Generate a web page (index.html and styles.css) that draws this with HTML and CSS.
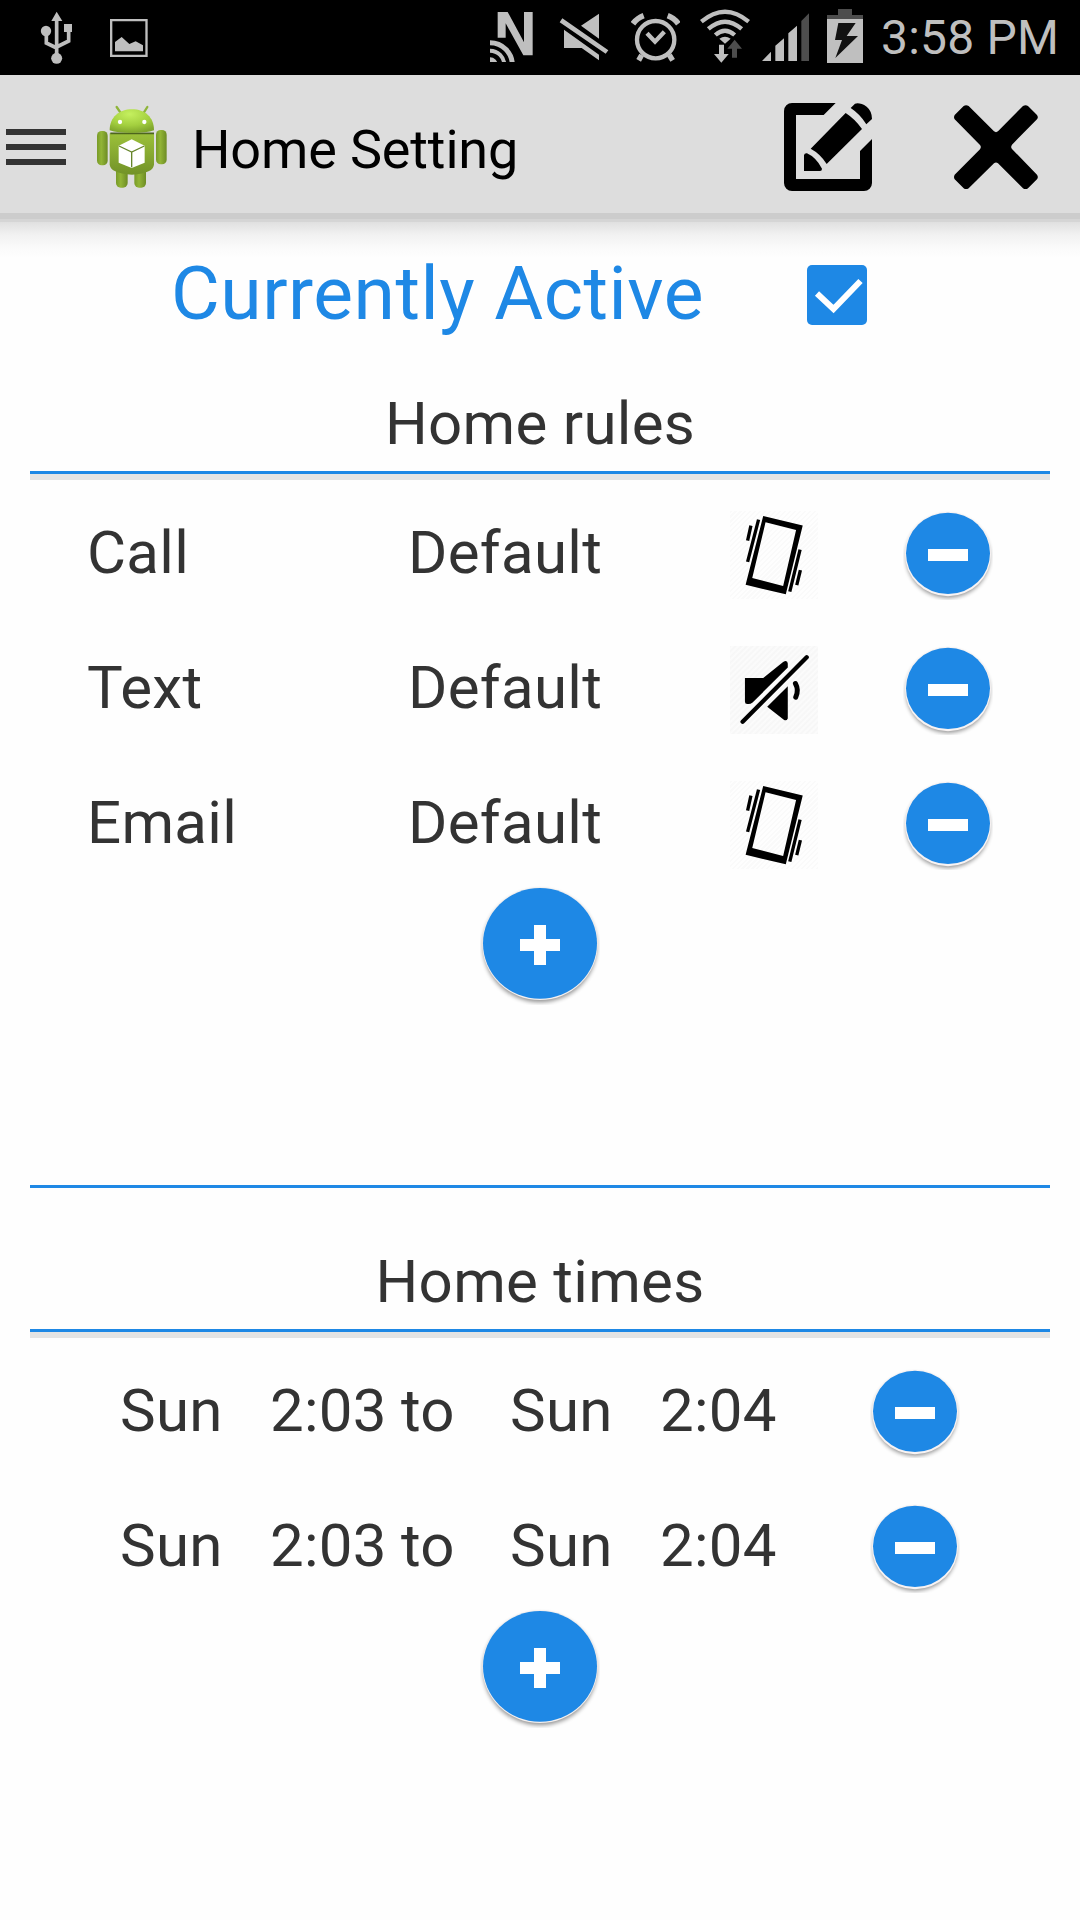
FILE: index.html
```html
<!DOCTYPE html>
<html lang="en">
<head>
<meta charset="utf-8">
<title>Home Setting</title>
<link rel="stylesheet" href="styles.css">
</head>
<body>
<svg class="defs" aria-hidden="true">
  <defs>
    <linearGradient id="green" x1="0" y1="0" x2="0" y2="1"><stop offset="0" stop-color="#9cc13a"/><stop offset="1" stop-color="#729228"/></linearGradient>
    <linearGradient id="limb" x1="0" y1="0" x2="1" y2="0"><stop offset="0" stop-color="#789a28"/><stop offset=".4" stop-color="#92b536"/><stop offset="1" stop-color="#6d8c24"/></linearGradient>
    <radialGradient id="head" cx=".45" cy=".2" r=".8"><stop offset="0" stop-color="#c5f05f"/><stop offset=".6" stop-color="#a3cf3f"/><stop offset="1" stop-color="#7fa52c"/></radialGradient>
    <filter id="soft" x="-20%" y="-20%" width="140%" height="150%"><feGaussianBlur stdDeviation="6"/></filter>
  </defs>
  <symbol id="minus" viewBox="0 0 270 270">
    <ellipse cx="135" cy="140" rx="126" ry="124" fill="#000" opacity=".42" filter="url(#soft)"/>
    <ellipse cx="135" cy="132" rx="129" ry="127" fill="#f8f3f3"/>
    <ellipse cx="135" cy="130" rx="126" ry="122" fill="#1e88e5"/>
    <path fill="#fff" d="M75 117h120v36H75z"/>
  </symbol>
  <symbol id="plus" viewBox="0 0 360 360">
    <ellipse cx="180" cy="184" rx="171" ry="168" fill="#000" opacity=".42" filter="url(#soft)"/>
    <ellipse cx="180" cy="176" rx="173" ry="169" fill="#f3efef"/>
    <ellipse cx="180" cy="175" rx="171" ry="166" fill="#1e88e5"/>
    <path fill="#fff" d="M162 120h36v42h42v36h-42v42h-36v-42h-42v-36h42z"/>
  </symbol>
  <symbol id="vibrate" viewBox="90 62 265 265">
    <path fill-rule="evenodd" d="M190 77 309 106 258 313 137 284ZM197 96 157 264 250 288 289 119Z"/>
    <path d="M176 88 143 215M153 106 143 151M301 178 270 305M302 240 291 285" stroke="#000" stroke-width="10"/>
  </symbol>
  <symbol id="mute" viewBox="90 467 265 265">
    <path d="M135 563H190L250 515Q263 508 264 520V532L158 637Q152 642 146 642H142Q135 642 135 635ZM264 588V685Q261 693 253 690L202 650Z"/>
    <path d="M128 695 321 501" fill="none" stroke="#000" stroke-width="13" stroke-linecap="round"/>
    <path d="M287 580Q298 600 288 621" fill="none" stroke="#000" stroke-width="15" stroke-linecap="round"/>
  </symbol>
</svg>

<header class="status-bar">
  <svg class="usb" viewBox="120 30 100 165" fill="#bfbfbf">
    <path d="M170 35 187 63H154ZM192 72h24v24h-24z"/><circle cx="138" cy="93" r="15.500"/><circle cx="170" cy="175" r="16.500"/>
    <path d="M170 60V165M139 100V129L170 144M206 92V123L170 141" fill="none" stroke="#bfbfbf" stroke-width="11"/>
  </svg>
  <svg class="photo" viewBox="330 57 114 114" fill="#bfbfbf">
    <path d="M333.500 60.500h106v107h-106z" fill="none" stroke="#bfbfbf" stroke-width="7"/><path d="M345 126 365 111 388 132 407 124 429 136V154H345Z"/>
  </svg>
  <svg class="nfc" viewBox="60 36 129 150" fill="#bfbfbf">
    <path d="M83 36H113L162 127V36H188V166H160L107 70V113H83Z"/>
    <g fill="none" stroke="#bfbfbf"><circle cx="60" cy="195" r="67" stroke-width="15"/><circle cx="60" cy="195" r="43" stroke-width="12"/><circle cx="60" cy="195" r="16" stroke-width="14"/></g>
  </svg>
  <svg class="sound-off" viewBox="267 40 150 144" fill="#bfbfbf"><path d="M277 56 415 152 407 162 269 68ZM387 42V117L333 78ZM282 90 387 165V182L335 145H282Z"/></svg>
  <svg class="alarm" viewBox="484 38 147 147" fill="none" stroke="#bfbfbf" stroke-width="13">
    <circle cx="558" cy="118" r="56"/><path d="M532 99 556 124 584 94"/><path d="M516 164 507 180M599 164 609 180" stroke-width="16"/><path d="M490 70Q503 53 522 46M626 70Q613 53 594 46" stroke-width="17"/>
  </svg>
  <svg class="wifi" viewBox="690 28 150 163" fill="#bfbfbf">
    <path d="M694 66Q765 6 836 66M715 88Q765 44 815 88M736 106Q765 80 794 106" fill="none" stroke="#bfbfbf" stroke-width="13"/>
    <path d="M748 117Q765 105 782 117L765 132ZM747 135h15v28h14L754 189 732 163h15z"/><path fill="#4d4d4d" d="M794 120 816 147H801V174H786V147H772Z"/>
  </svg>
  <svg class="signal" viewBox="-25 39 142 144" fill="#bfbfbf"><path d="M-25 183 2 155V183ZM15 183V137L41 115V183ZM54 183V100L80 77V183Z"/><path fill="#4d4d4d" d="M93 183V63L117 39V183Z"/></svg>
  <svg class="battery" viewBox="171 27 108 162"><path fill="#4d4d4d" d="M204 27h42v18h33v12H171V45h33z"/><path fill="#bfbfbf" d="M171 57h108v132H171z"/><path fill="#111" d="M205 69H257L230 108H264L196 174 216 120H195Z"/></svg>
  <span class="clock">3:58 PM</span>
</header>

<nav class="action-bar">
  <svg class="menu" viewBox="0 0 60 36" fill="#333"><path d="M0 0h60v6H0zM0 15h60v6H0zM0 30h60v6H0z"/></svg>
  <svg class="robot" viewBox="288 315 216 252">
    <path d="M350 321 363 340M442 321 430 340" stroke="#8fb53a" stroke-width="7" stroke-linecap="round"/>
    <rect x="348" y="500" width="35" height="63" rx="14" fill="url(#limb)"/><rect x="403" y="500" width="35" height="63" rx="14" fill="url(#limb)"/>
    <rect x="291" y="393" width="32" height="103" rx="14" fill="url(#limb)"/><rect x="468" y="390" width="32" height="103" rx="14" fill="url(#limb)"/>
    <path d="M329 400H462V493Q462 520 396 524Q329 520 329 493Z" fill="url(#green)"/>
    <path d="M331 400H462" stroke="#4d651d" stroke-width="5"/>
    <path d="M329 391C329 352 357 328 396 328S462 352 462 391Q440 399 396 399T329 391Z" fill="url(#head)"/>
    <circle cx="360" cy="366" r="6.500" fill="#fff"/><circle cx="433" cy="366" r="6.500" fill="#fff"/>
    <path d="M395 418 434 437V488L395 504 356 488V437Z" fill="#fff"/><path d="M357 438 395 456 433 438M395 456V502" fill="none" stroke="#66852a" stroke-width="4"/>
  </svg>
  <h1 class="title">Home Setting</h1>
  <svg class="edit" viewBox="132 69 264 264">
    <path d="M287 69H156A24 24 0 0 0 132 93V309A24 24 0 0 0 156 333H372A24 24 0 0 0 396 309V177L360 213V297H168V105H251ZM317 99Q345 117 366 147L260 252Q242 222 212 206ZM192 273V226Q193 219 201 220 228 232 246 266 246 273 240 273ZM332 84 345 71Q360 67 380 80 396 93 396 117L379 133Q360 102 332 84Z"/>
  </svg>
  <svg class="close" viewBox="642 74 252 254">
    <path d="M671 77Q678 72 686 77L762 153Q768 158 774 153L849 77Q857 72 864 77L891 104Q896 111 891 117L816 193Q811 200 816 206L891 283Q896 290 891 297L864 324Q857 329 849 324L774 249Q768 244 762 249L686 324Q678 329 671 324L644 297Q640 290 644 283L720 207Q725 200 720 194L644 117Q640 111 644 104Z"/>
  </svg>
</nav>
<div class="bar-shadow"></div>

<main class="content">
  <div class="active-row">
    <span class="active-label">Currently Active</span>
    <svg class="checkbox" viewBox="0 0 60 60"><rect width="60" height="60" rx="5" fill="#1e88e5"/><path d="M10 28.500 26.500 44 53.500 16" fill="none" stroke="#fff" stroke-width="6"/></svg>
  </div>

  <section class="rules">
    <h2 class="heading">Home rules</h2>
    <div class="rule-row"><span>Call</span><span>Default</span><svg class="mode"><use href="#vibrate"/></svg><svg class="remove"><use href="#minus"/></svg></div>
    <div class="rule-row"><span>Text</span><span>Default</span><svg class="mode mode-mute"><use href="#mute"/></svg><svg class="remove"><use href="#minus"/></svg></div>
    <div class="rule-row"><span>Email</span><span>Default</span><svg class="mode"><use href="#vibrate"/></svg><svg class="remove"><use href="#minus"/></svg></div>
    <svg class="add"><use href="#plus"/></svg>
  </section>

  <section class="times">
    <h2 class="heading">Home times</h2>
    <div class="time-row"><span>Sun</span><span>2:03</span><span>to</span><span>Sun</span><span>2:04</span><svg class="remove"><use href="#minus"/></svg></div>
    <div class="time-row"><span>Sun</span><span>2:03</span><span>to</span><span>Sun</span><span>2:04</span><svg class="remove"><use href="#minus"/></svg></div>
    <svg class="add"><use href="#plus"/></svg>
  </section>
</main>
</body>
</html>
```

FILE: styles.css
```css
* { box-sizing: border-box; }
body {
  margin: 0;
  width: 1080px;
  height: 1920px;
  overflow: hidden;
  background: #fefefe;
  color: #333;
  font-family: Roboto, "Liberation Sans", sans-serif;
}
svg { display: block; flex: none; }
.defs { position: absolute; width: 0; height: 0; }

/* System status bar */
.status-bar {
  display: flex;
  align-items: flex-start;
  height: 75px;
  background: #000;
  color: #bfbfbf;
}
.usb { width: 33.33px; height: 55px; margin: 10px 0 0 40px; }
.photo { width: 38px; height: 38px; margin: 19px 0 0 36.67px; }
.nfc { width: 43px; height: 50px; margin: 12px 0 0 342px; }
.sound-off { width: 50px; height: 48px; margin: 13.33px 0 0 26px; }
.alarm { width: 49px; height: 49px; margin: 12.67px 0 0 22.33px; }
.wifi { width: 50px; height: 54.33px; margin: 9.33px 0 0 19.67px; }
.signal { width: 47.33px; height: 48px; margin: 13px 0 0 11.67px; }
.battery { width: 36px; height: 54px; margin: 9px 0 0 18px; }
.clock { margin-left: 18px; font-size: 48px; letter-spacing: 0.2px; line-height: 75px; white-space: nowrap; }

/* Application bar */
.action-bar {
  display: flex;
  align-items: flex-start;
  height: 147px;
  background: #ddd;
  border-bottom: 3px solid #d5d5d5;
  box-shadow: inset 0 -6px #ccc;
}
.menu { width: 60px; height: 36px; margin: 54px 0 0 6px; }
.robot { width: 72px; height: 84px; margin: 30px 0 0 30px; }
.title {
  margin: 0 0 0 24px;
  width: 592px;
  color: #000;
  font-size: 54px;
  font-weight: 400;
  letter-spacing: -0.15px;
  line-height: 150px;
}
.edit { width: 88px; height: 88px; margin-top: 28px; }
.close { width: 84px; height: 84.67px; margin: 29.67px 0 0 82px; }
.bar-shadow { height: 36px; background: linear-gradient(#e0e0e0, #f1f1f1 35%, #fafafa 70%, #fefefe); }

/* Settings */
.content { padding: 0 30px; font-size: 60px; letter-spacing: 0.3px; }
.active-row { display: flex; height: 116px; padding-left: 141px; }
.active-label {
  width: 636px;
  color: #1e88e5;
  font-size: 75px;
  letter-spacing: 0.5px;
  line-height: 70px;
  white-space: nowrap;
}
.checkbox { width: 60px; height: 60px; margin-top: 7px; }
.heading {
  height: 106px;
  margin: 0 0 13px;
  border-bottom: 6px solid #e4e4e4;
  box-shadow: inset 0 -3px #1e88e5;
  font-size: 60px;
  font-weight: 400;
  line-height: 99px;
  text-align: center;
}
.rules { height: 814px; border-bottom: 3px solid #1e88e5; }
.times { padding-top: 44px; }
.rule-row, .time-row {
  display: grid;
  align-items: center;
  height: 135px;
  padding-bottom: 11px;
}
.rule-row { grid-template-columns: 321px 322px 173px 90px; padding-left: 57px; }
.time-row { grid-template-columns: 150px 131px 109px 150px 210px 90px; padding-left: 90px; }
.rule-row span, .time-row span { padding-bottom: 5px; line-height: 80px; white-space: nowrap; }
.mode {
  width: 88px;
  height: 88px;
  background: repeating-linear-gradient(135deg, #fafafa 0 1.5px, #fefefe 1.5px 3.5px);
}
.mode-mute { background: repeating-linear-gradient(135deg, #f6f6f6 0, #fcfcfc 2px, #f6f6f6 4px); }
.remove { width: 90px; height: 90px; }
.add { width: 120px; height: 120px; margin: -13px auto 0; }
```
